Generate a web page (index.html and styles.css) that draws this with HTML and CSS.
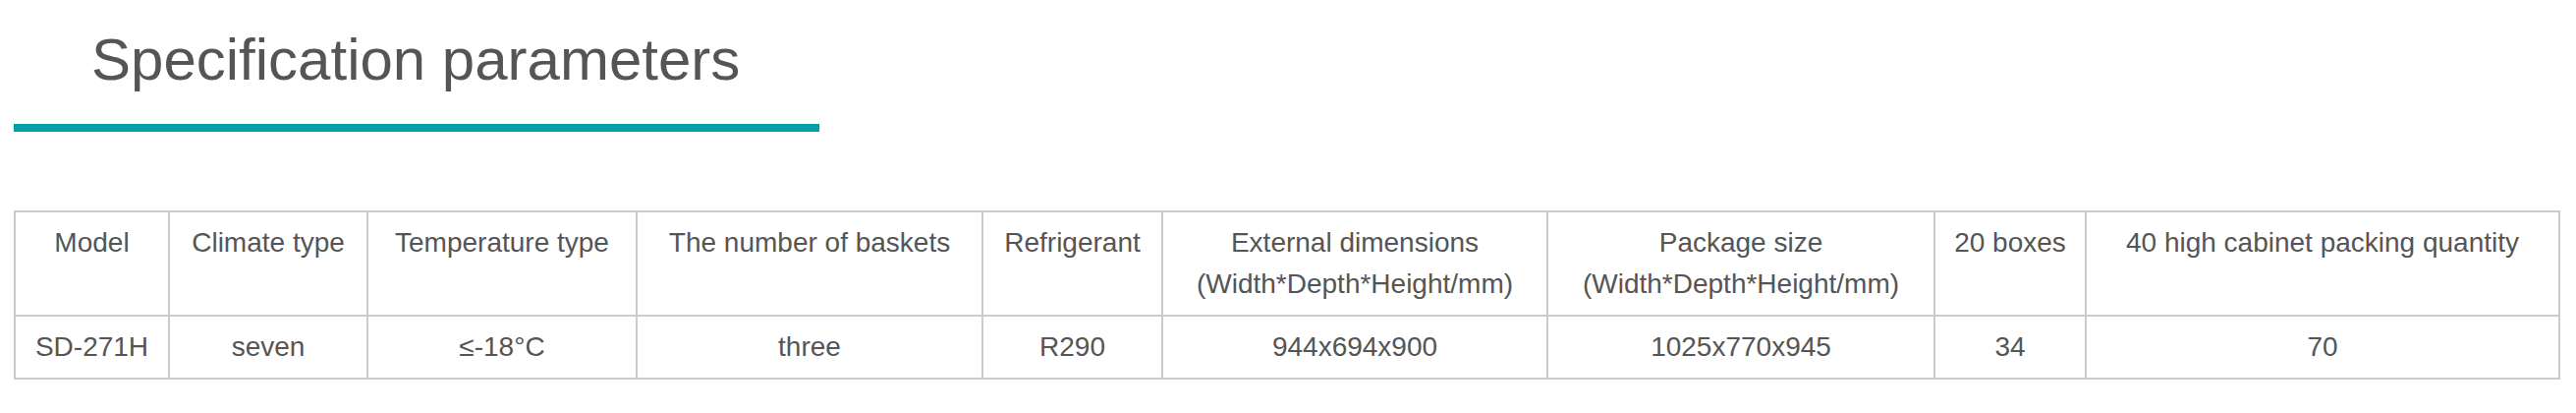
FILE: index.html
```html
<!DOCTYPE html>
<html lang="en">
<head>
<meta charset="utf-8">
<title>Specification parameters</title>
<link rel="stylesheet" href="styles.css">
</head>
<body>
<div class="wrap">
  <h2 class="title">Specification parameters</h2>
  <div class="title-bar"></div>
  <table class="spec">
    <colgroup>
      <col class="c1"><col class="c2"><col class="c3"><col class="c4"><col class="c5"><col class="c6"><col class="c7"><col class="c8"><col class="c9">
    </colgroup>
    <tr>
      <td>Model</td>
      <td>Climate type</td>
      <td>Temperature type</td>
      <td>The number of baskets</td>
      <td>Refrigerant</td>
      <td>External dimensions<br>(Width*Depth*Height/mm)</td>
      <td>Package size<br>(Width*Depth*Height/mm)</td>
      <td>20 boxes</td>
      <td>40 high cabinet packing quantity</td>
    </tr>
    <tr>
      <td>SD-271H</td>
      <td>seven</td>
      <td>≤-18°C</td>
      <td>three</td>
      <td>R290</td>
      <td>944x694x900</td>
      <td>1025x770x945</td>
      <td>34</td>
      <td>70</td>
    </tr>
  </table>
</div>
</body>
</html>
```
FILE: styles.css
```css
html, body {
  margin: 0;
  padding: 0;
  background: #ffffff;
}

.wrap {
  padding: 26px 16px 0 14px;
  font-family: "Liberation Sans", Arial, Helvetica, sans-serif;
}

.title {
  margin: 0;
  padding-left: 79px;
  font-size: 60px;
  line-height: 70px;
  font-weight: normal;
  color: #555555;
}

.title-bar {
  width: 820px;
  height: 8px;
  margin-top: 30px;
  background: #00a0a9;
}

.spec {
  margin-top: 80px;
  width: 2592px;
  table-layout: fixed;
  border-collapse: separate;
  border-spacing: 0;
  border-top: 2px solid #cccccc;
  border-left: 2px solid #cccccc;
  font-size: 28px;
  line-height: 42px;
  color: #555555;
}

.spec td {
  padding: 10px 6px;
  text-align: center;
  vertical-align: top;
  border-right: 2px solid #cccccc;
  border-bottom: 2px solid #cccccc;
  white-space: nowrap;
}

.c1 { width: 157px; }
.c2 { width: 202px; }
.c3 { width: 274px; }
.c4 { width: 352px; }
.c5 { width: 183px; }
.c6 { width: 392px; }
.c7 { width: 394px; }
.c8 { width: 154px; }
.c9 { width: 482px; }
```
